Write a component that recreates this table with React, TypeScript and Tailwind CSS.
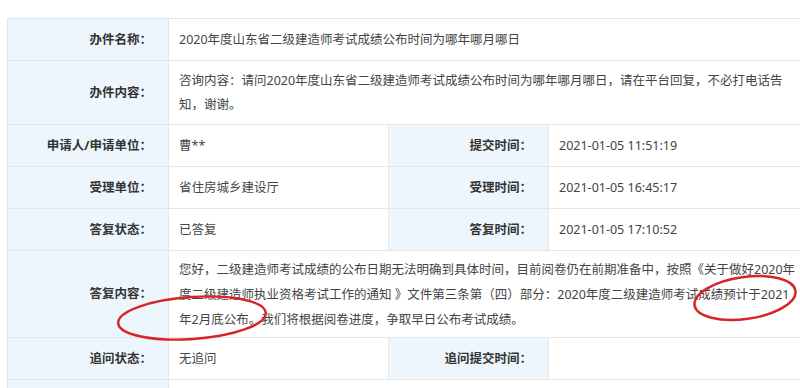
import React from 'react'

const label = "bg-[#edf6fd] text-right pr-4 font-bold text-[#333] border border-[#e6e6e6] align-middle"
const value = "pl-[10px] pr-0 text-[#444] border border-[#e6e6e6] align-middle"

const App = () => {
  return (
    <div className="relative w-[800px] h-[388px] overflow-hidden bg-white font-['Noto_Sans','Noto_Sans_CJK_SC',sans-serif] text-[12.5px] leading-[24px]">
      <div className="pt-[18px] pl-[7px]">
        <table className="table-fixed border-collapse w-[820px]">
          <colgroup>
            <col className="w-[161px]" />
            <col className="w-[220px]" />
            <col className="w-[160px]" />
            <col />
          </colgroup>
          <tbody>
            <tr className="h-[42px]">
              <td className={label}>办件名称：</td>
              <td className={value} colSpan={3}>2020年度山东省二级建造师考试成绩公布时间为哪年哪月哪日</td>
            </tr>
            <tr className="h-[64px]">
              <td className={label}>办件内容：</td>
              <td className={value} colSpan={3}>
                咨询内容：请问2020年度山东省二级建造师考试成绩公布时间为哪年哪月哪日，请在平台回复，不必打电话告<br />知，谢谢。
              </td>
            </tr>
            <tr className="h-[42px]">
              <td className={label}>申请人/申请单位：</td>
              <td className={value}>曹**</td>
              <td className={label}>提交时间：</td>
              <td className={value}>2021-01-05 11:51:19</td>
            </tr>
            <tr className="h-[42px]">
              <td className={label}>受理单位：</td>
              <td className={value}>省住房城乡建设厅</td>
              <td className={label}>受理时间：</td>
              <td className={value}>2021-01-05 16:45:17</td>
            </tr>
            <tr className="h-[42px]">
              <td className={label}>答复状态：</td>
              <td className={value}>已答复</td>
              <td className={label}>答复时间：</td>
              <td className={value}>2021-01-05 17:10:52</td>
            </tr>
            <tr className="h-[87px]">
              <td className={label}>答复内容：</td>
              <td className={`${value} leading-[25px] whitespace-nowrap`} colSpan={3}>
                您好，二级建造师考试成绩的公布日期无法明确到具体时间，目前阅卷仍在前期准备中，按照《关于做好2020年<br />
                度二级建造师执业资格考试工作的通知 》文件第三条第（四）部分：2020年度二级建造师考试成绩预计于2021<br />
                年2月底公布。我们将根据阅卷进度，争取早日公布考试成绩。
              </td>
            </tr>
            <tr className="h-[42px]">
              <td className={label}>追问状态：</td>
              <td className={value}>无追问</td>
              <td className={label}>追问提交时间：</td>
              <td className={value}></td>
            </tr>
            <tr className="h-[42px]">
              <td className={label}>&nbsp;</td>
              <td className={value} colSpan={3}></td>
            </tr>
          </tbody>
        </table>
      </div>

      {/* red hand-drawn circles */}
      <svg className="absolute inset-0 pointer-events-none" width="800" height="388">
        <ellipse cx="192" cy="318" rx="74" ry="21" transform="rotate(-4 192 318)" fill="none" stroke="#d8232a" strokeWidth="2.5" />
        <ellipse cx="745" cy="298" rx="51" ry="21" transform="rotate(-8 745 298)" fill="none" stroke="#d8232a" strokeWidth="2.5" />
      </svg>
    </div>
  )
}

export default App
